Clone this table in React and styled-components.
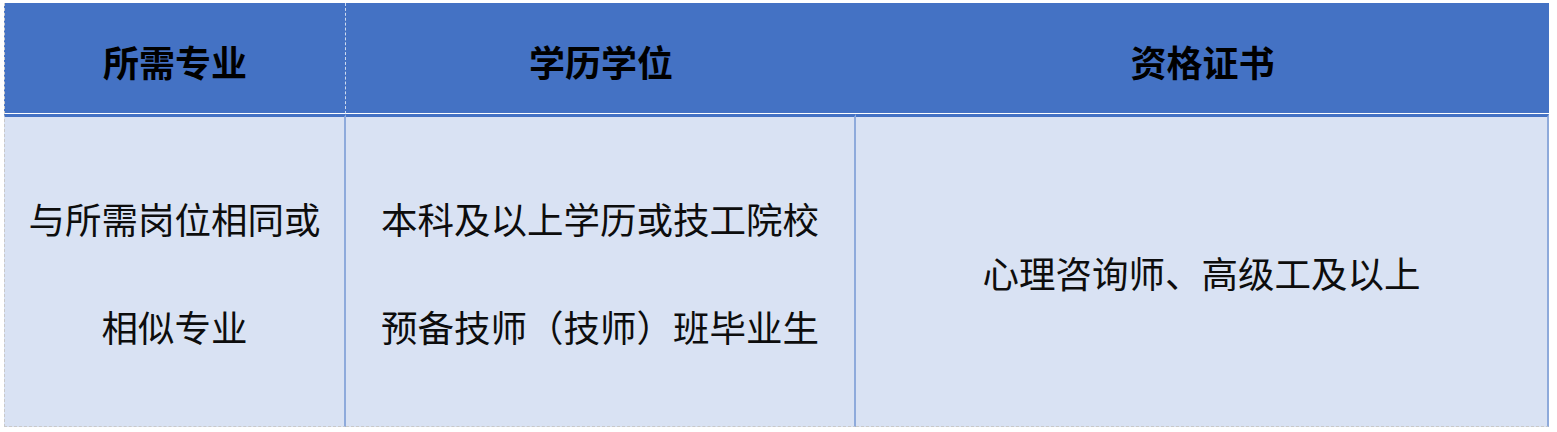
import React from "react";
import styled, { createGlobalStyle } from "styled-components";

const GlobalStyle = createGlobalStyle`
  html, body {
    margin: 0;
    padding: 0;
    background: #ffffff;
  }
  body {
    font-family: "Noto Sans CJK SC", "Noto Sans", sans-serif;
  }
`;

const columns = [
  {
    title: "所需专业",
    lines: ["与所需岗位相同或", "相似专业"],
  },
  {
    title: "学历学位",
    lines: ["本科及以上学历或技工院校", "预备技师（技师）班毕业生"],
  },
  {
    title: "资格证书",
    lines: ["心理咨询师、高级工及以上"],
  },
];

export default function App() {
  return (
    <>
      <GlobalStyle />
      <Page>
        <Table>
          {columns.map((col, i) => (
            <HeaderCell key={col.title} $divider={i === 0}>
              {col.title}
            </HeaderCell>
          ))}
          {columns.map((col, i) => (
            <BodyCell key={col.title + "-body"} $first={i === 0}>
              {col.lines.map((line) => (
                <Line key={line}>{line}</Line>
              ))}
            </BodyCell>
          ))}
        </Table>
      </Page>
    </>
  );
}

const Page = styled.div`
  padding: 3px 0 0 4px;
  width: 1557px;
  height: 432px;
  box-sizing: border-box;
  overflow: hidden;
`;

const Table = styled.div`
  display: grid;
  grid-template-columns: 342px 510px 693px;
  grid-template-rows: 111px 313px;
  width: 1545px;
`;

const HeaderCell = styled.div`
  display: flex;
  align-items: center;
  justify-content: center;
  padding-top: 6px;
  box-sizing: border-box;
  background: #4472c4;
  border-bottom: 1px solid #ffffff;
  border-left: ${(p) => (p.$divider ? "1px dashed #c9c9c9" : "none")};
  border-right: ${(p) => (p.$divider ? "1px dashed rgba(255,255,255,0.75)" : "none")};
  font-size: 36px;
  font-weight: 700;
  color: #000000;
`;

const BodyCell = styled.div`
  display: flex;
  flex-direction: column;
  align-items: center;
  justify-content: center;
  box-sizing: border-box;
  background: #d9e2f3;
  border-top: 3px solid #4472c4;
  border-right: 2px solid #8eaadb;
  border-left: ${(p) => (p.$first ? "1px dashed #c9c9c9" : "none")};
  border-bottom: 1px dashed #c9c9c9;
  padding-top: 2px;
`;

const Line = styled.div`
  font-size: 36.5px;
  line-height: 108px;
  color: #0d0d0d;
  white-space: nowrap;
`;
